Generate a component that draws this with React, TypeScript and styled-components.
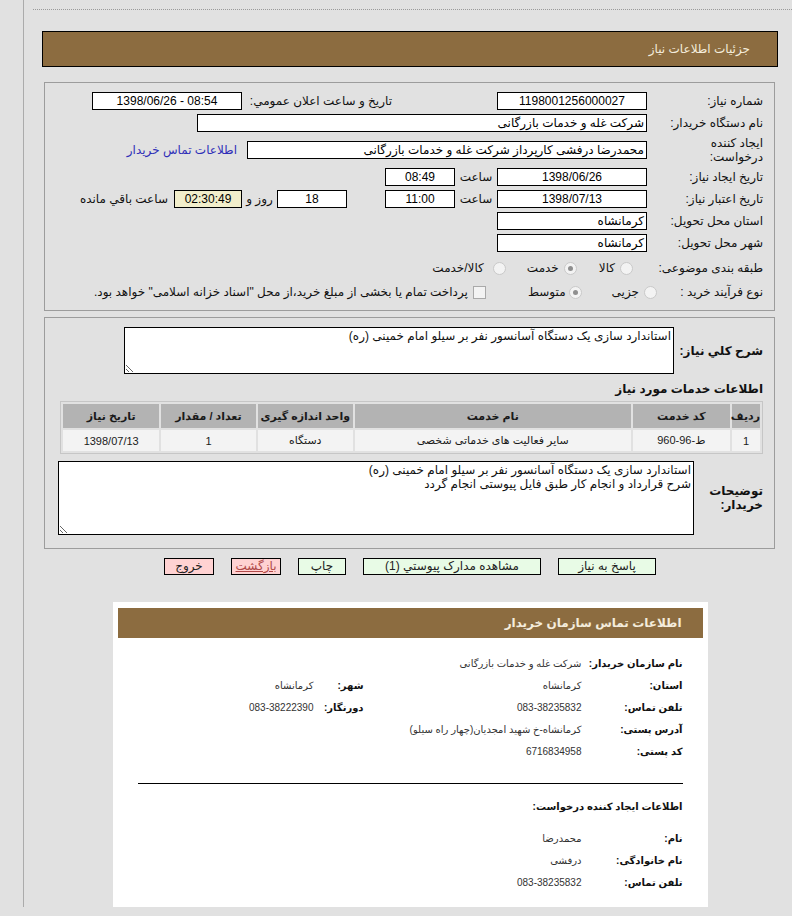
import React from 'react';
import styled, { createGlobalStyle } from 'styled-components';

const GlobalStyle = createGlobalStyle`
  html, body { margin: 0; padding: 0; background: #e1e1e1; }
  body { font-family: "Liberation Sans", "DejaVu Sans", sans-serif; font-size: 12px; color: #000; }
  * { box-sizing: border-box; }
`;

const Frame = styled.div`
  margin-left: 23px;
  border-left: 1px solid #ababab;
  min-height: 905px;
  padding: 9px 0 0 9px;
`;

const DottedRule = styled.div`
  border-top: 1px dotted #9a9a9a;
  height: 0;
`;

const Main = styled.div`
  width: 736px;
  margin-left: 9px;
  direction: rtl;
`;

const PageHeader = styled.div`
  margin-top: 21px;
  height: 36px;
  border: 1px solid #000;
  background: #8c6c40;
  color: #f4ecdc;
  display: flex;
  align-items: center;
  padding-right: 27px;
  font-size: 12px;
`;

const Panel = styled.div<{ $top: number; $pt: number; $pb: number }>`
  width: 731px;
  margin: ${(p) => p.$top}px 3px 0 0;
  border: 1px solid #9c9c9c;
  padding: ${(p) => p.$pt}px 11px ${(p) => p.$pb}px 12px;
`;

const Row = styled.div<{ $h?: number; $mt?: number }>`
  display: flex;
  align-items: center;
  height: ${(p) => p.$h ?? 22}px;
  margin-top: ${(p) => p.$mt ?? 0}px;
`;

const Label = styled.div<{ $w?: number; $bold?: boolean; $mr?: number }>`
  width: ${(p) => p.$w ?? 116}px;
  flex: none;
  text-align: right;
  line-height: 14px;
  font-weight: ${(p) => (p.$bold ? 'bold' : 'normal')};
  margin-right: ${(p) => p.$mr ?? 0}px;
  color: #111;
`;

const Field = styled.div<{ $w: number; $align?: string; $bg?: string; $ml?: number; $ltr?: boolean }>`
  width: ${(p) => p.$w}px;
  flex: none;
  height: 18px;
  border: 1px solid #000;
  background: ${(p) => p.$bg ?? '#fff'};
  line-height: 16px;
  padding: 0 2px;
  text-align: ${(p) => p.$align ?? 'center'};
  direction: ${(p) => (p.$ltr ? 'ltr' : 'rtl')};
  white-space: nowrap;
  overflow: hidden;
  margin-right: ${(p) => p.$ml ?? 0}px;
`;

const Inline = styled.span<{ $w?: number; $mr?: number }>`
  flex: none;
  ${(p) => (p.$w ? `width: ${p.$w}px;` : '')}
  text-align: center;
  margin-right: ${(p) => p.$mr ?? 0}px;
  color: #111;
  white-space: nowrap;
`;

const Link = styled.a`
  margin-right: 10px;
  color: #2f2fb8;
  text-decoration: none;
  white-space: nowrap;
`;

const OptionGroup = styled.div<{ $mr: number }>`
  display: flex;
  align-items: center;
  margin-right: ${(p) => p.$mr}px;
`;

const Option = styled.label<{ $gap: number; $mr?: number }>`
  display: flex;
  align-items: center;
  gap: ${(p) => p.$gap}px;
  margin-right: ${(p) => p.$mr ?? 0}px;
  color: #111;
  white-space: nowrap;
`;

const RadioDot = styled.span<{ $on?: boolean }>`
  width: 13px;
  height: 13px;
  border-radius: 50%;
  border: 1px solid #c9c9c9;
  background: #f3f3f3;
  display: flex;
  align-items: center;
  justify-content: center;
  &::after {
    content: '';
    width: 5px;
    height: 5px;
    border-radius: 50%;
    background: ${(p) => (p.$on ? '#8f8f8f' : 'transparent')};
  }
`;

const CheckBox = styled.span`
  width: 13px;
  height: 13px;
  border: 1px solid #a9a9a9;
  background: #f3f3f3;
`;

const TextBox = styled.textarea<{ $w: number; $h: number }>`
  width: ${(p) => p.$w}px;
  height: ${(p) => p.$h}px;
  flex: none;
  border: 1px solid #000;
  background: #fff;
  font-family: "Liberation Sans", "DejaVu Sans", sans-serif;
  font-size: 12px;
  line-height: 14px;
  padding: 1px 2px;
  direction: rtl;
  color: #111;
  resize: both;
  outline: none;
`;

const SectionTitle = styled.div`
  margin-top: 7px;
  line-height: 16px;
  font-weight: bold;
  color: #111;
`;

const Table = styled.table`
  margin-top: 4px;
  width: 703px;
  border: 1px solid #c6c6c6;
  border-spacing: 2px;
  table-layout: fixed;
  font-size: 11px;
`;

const Th = styled.th<{ $w: number }>`
  width: ${(p) => p.$w}px;
  height: 24px;
  background: #b3b3b3;
  font-weight: bold;
  color: #1a1a1a;
  padding: 0;
  text-align: center;
`;

const Td = styled.td`
  height: 21px;
  background: #f3f3f3;
  text-align: center;
  color: #1a1a1a;
  padding: 0;
`;

const ButtonRow = styled.div`
  display: flex;
  justify-content: center;
  gap: 17px;
  margin-top: 9px;
`;

const Button = styled.button<{ $w: number; $tone: 'green' | 'red'; $link?: boolean }>`
  width: ${(p) => p.$w}px;
  height: 17px;
  border: 1px solid #000;
  background: ${(p) => (p.$tone === 'green' ? '#e8fbe6' : '#ffd2d2')};
  color: ${(p) => (p.$link ? '#b04848' : '#222')};
  text-decoration: ${(p) => (p.$link ? 'underline' : 'none')};
  font-family: "Liberation Sans", "DejaVu Sans", sans-serif;
  font-size: 12px;
  line-height: 15px;
  padding: 0;
  direction: rtl;
`;

const Card = styled.div`
  width: 595px;
  height: 305px;
  margin: 27px auto 0;
  background: #fff;
  padding: 6px 5px 0;
`;

const CardHeader = styled.div`
  height: 30px;
  background: #8c6c40;
  color: #f4ecdc;
  font-weight: bold;
  font-size: 12px;
  display: flex;
  align-items: center;
  padding-right: 21px;
`;

const CardGrid = styled.div<{ $cols: string; $mt: number }>`
  display: grid;
  grid-template-columns: ${(p) => p.$cols};
  grid-auto-rows: 22px;
  align-items: center;
  padding: 0 20px;
  margin-top: ${(p) => p.$mt}px;
`;

const CardLabel = styled.div`
  font-weight: bold;
  font-size: 10px;
  color: #111;
  white-space: nowrap;
`;

const CardValue = styled.div<{ $span?: number }>`
  font-size: 10px;
  color: #333;
  white-space: nowrap;
  ${(p) => (p.$span ? `grid-column: span ${p.$span};` : '')}
`;

const Divider = styled.div`
  margin: 21px 20px 0;
  border-top: 1px solid #000;
`;

const CardTitle = styled.div`
  margin: 12px 20px 0;
  height: 22px;
  line-height: 22px;
  font-weight: bold;
  font-size: 10px;
  color: #111;
`;

export default function App() {
  return (
    <>
      <GlobalStyle />
      <Frame>
        <DottedRule />
        <Main>
          <PageHeader>جزئیات اطلاعات نیاز</PageHeader>

          <Panel $top={15} $pt={7} $pb={6}>
            <Row>
              <Label>شماره نیاز:</Label>
              <Field $w={150}>1198001256000027</Field>
              <Label $w={150} $mr={105}>تاریخ و ساعت اعلان عمومي:</Label>
              <Field $w={150} $ltr>1398/06/26 - 08:54</Field>
            </Row>
            <Row>
              <Label>نام دستگاه خریدار:</Label>
              <Field $w={450} $align="right">شرکت غله و خدمات بازرگانی</Field>
            </Row>
            <Row $h={32}>
              <Label>ایجاد کننده<br />درخواست:</Label>
              <Field $w={400} $align="right">محمدرضا درفشی کارپرداز شرکت غله و خدمات بازرگانی</Field>
              <Link href="#">اطلاعات تماس خریدار</Link>
            </Row>
            <Row>
              <Label>تاریخ ایجاد نیاز:</Label>
              <Field $w={150}>1398/06/26</Field>
              <Inline $w={42}>ساعت</Inline>
              <Field $w={70}>08:49</Field>
            </Row>
            <Row>
              <Label>تاریخ اعتبار نیاز:</Label>
              <Field $w={150}>1398/07/13</Field>
              <Inline $w={42}>ساعت</Inline>
              <Field $w={70}>11:00</Field>
              <Field $w={70} $ml={38}>18</Field>
              <Inline $w={35}>روز و</Inline>
              <Field $w={68} $bg="#f2eecb">02:30:49</Field>
              <Inline $mr={6}>ساعت باقي مانده</Inline>
            </Row>
            <Row>
              <Label>استان محل تحویل:</Label>
              <Field $w={150} $align="right">کرمانشاه</Field>
            </Row>
            <Row>
              <Label>شهر محل تحویل:</Label>
              <Field $w={150} $align="right">کرمانشاه</Field>
            </Row>
            <Row $h={24} $mt={2}>
              <Label>طبقه بندی موضوعی:</Label>
              <OptionGroup $mr={14}>
                <Option $gap={5}><RadioDot />کالا</Option>
                <Option $gap={5} $mr={22}><RadioDot $on />خدمت</Option>
                <Option $gap={9} $mr={21}><RadioDot />کالا/خدمت</Option>
              </OptionGroup>
            </Row>
            <Row $h={24}>
              <Label $w={106}>نوع فرآیند خرید :</Label>
              <OptionGroup $mr={0}>
                <Option $gap={5}><RadioDot />جزیی</Option>
                <Option $gap={3} $mr={30}><RadioDot $on />متوسط</Option>
                <Option $gap={5} $mr={42}>
                  <CheckBox />
                  {'پرداخت تمام یا بخشی از مبلغ خرید،از محل "اسناد خزانه اسلامی" خواهد بود.'}
                </Option>
              </OptionGroup>
            </Row>
          </Panel>

          <Panel $top={6} $pt={9} $pb={13}>
            <Row $h={47}>
              <Label $w={89} $bold>شرح کلي نیاز:</Label>
              <TextBox $w={550} $h={47} readOnly defaultValue="استاندارد سازی یک دستگاه آسانسور نفر بر سیلو امام خمینی (ره)" />
            </Row>
            <SectionTitle>اطلاعات خدمات مورد نیاز</SectionTitle>
            <Table>
              <thead>
                <tr>
                  <Th $w={28}>ردیف</Th>
                  <Th $w={97}>کد خدمت</Th>
                  <Th $w={275}>نام خدمت</Th>
                  <Th $w={95}>واحد اندازه گیری</Th>
                  <Th $w={94}>تعداد / مقدار</Th>
                  <Th $w={96}>تاریخ نیاز</Th>
                </tr>
              </thead>
              <tbody>
                <tr>
                  <Td>1</Td>
                  <Td><bdo dir="ltr">960-96-ط</bdo></Td>
                  <Td>سایر فعالیت های خدماتی شخصی</Td>
                  <Td>دستگاه</Td>
                  <Td>1</Td>
                  <Td>1398/07/13</Td>
                </tr>
              </tbody>
            </Table>
            <Row $h={74} $mt={7}>
              <Label $w={69} $bold>توضیحات<br />خریدار:</Label>
              <TextBox
                $w={636}
                $h={74}
                readOnly
                defaultValue={'استاندارد سازی یک دستگاه آسانسور نفر بر سیلو امام خمینی (ره)\nشرح قرارداد و انجام کار طبق فایل پیوستی انجام گردد'}
              />
            </Row>
          </Panel>

          <ButtonRow>
            <Button $w={98} $tone="green">پاسخ به نیاز</Button>
            <Button $w={178} $tone="green">مشاهده مدارک پیوستي (1)</Button>
            <Button $w={48} $tone="green">چاپ</Button>
            <Button $w={50} $tone="red" $link>بازگشت</Button>
            <Button $w={50} $tone="red">خروج</Button>
          </ButtonRow>

          <Card>
            <CardHeader>اطلاعات تماس سازمان خریدار</CardHeader>
            <CardGrid $cols="101px 218px 50px 1fr" $mt={14}>
              <CardLabel>نام سازمان خریدار:</CardLabel>
              <CardValue $span={3}>شرکت غله و خدمات بازرگانی</CardValue>
              <CardLabel>استان:</CardLabel>
              <CardValue>کرمانشاه</CardValue>
              <CardLabel>شهر:</CardLabel>
              <CardValue>کرمانشاه</CardValue>
              <CardLabel>تلفن تماس:</CardLabel>
              <CardValue>083-38235832</CardValue>
              <CardLabel>دورنگار:</CardLabel>
              <CardValue>083-38222390</CardValue>
              <CardLabel>آدرس پستی:</CardLabel>
              <CardValue $span={3}>کرمانشاه-خ شهید امجدیان(چهار راه سیلو)</CardValue>
              <CardLabel>کد پستی:</CardLabel>
              <CardValue $span={3}>6716834958</CardValue>
            </CardGrid>
            <Divider />
            <CardTitle>اطلاعات ایجاد کننده درخواست:</CardTitle>
            <CardGrid $cols="101px 1fr" $mt={9}>
              <CardLabel>نام:</CardLabel>
              <CardValue>محمدرضا</CardValue>
              <CardLabel>نام خانوادگی:</CardLabel>
              <CardValue>درفشی</CardValue>
              <CardLabel>تلفن تماس:</CardLabel>
              <CardValue>083-38235832</CardValue>
            </CardGrid>
          </Card>
        </Main>
      </Frame>
    </>
  );
}
